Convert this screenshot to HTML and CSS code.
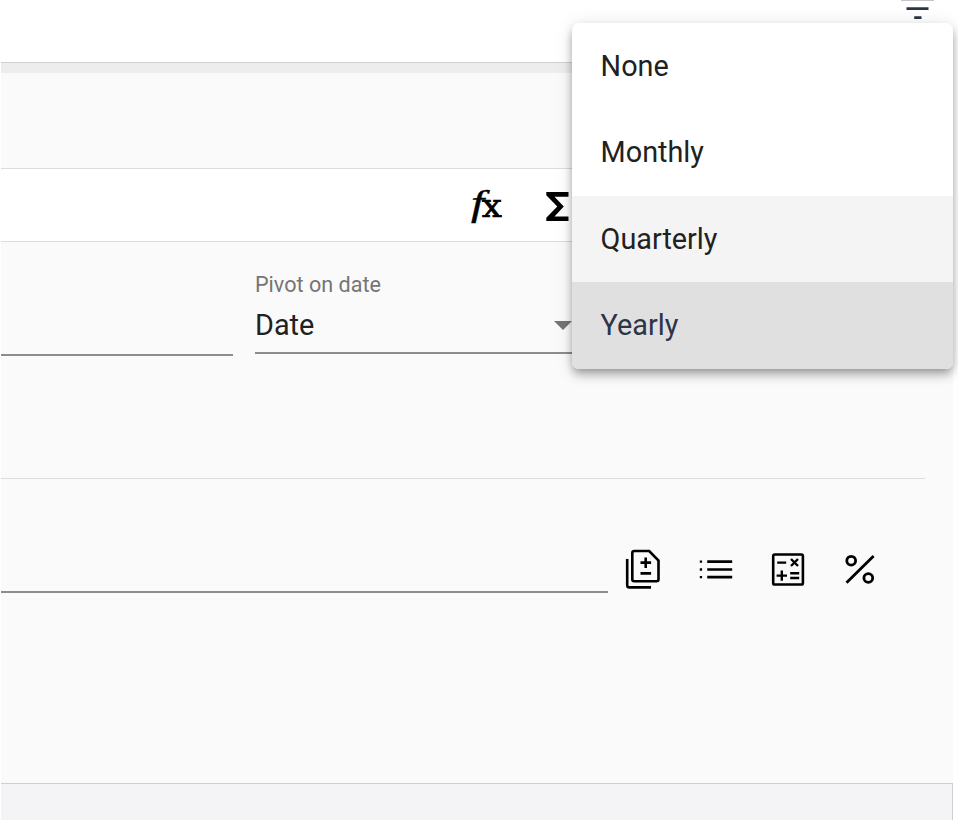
FILE: index.html
```html
<!DOCTYPE html>
<html lang="en">
<head>
<meta charset="utf-8">
<title>Pivot settings</title>
<link rel="stylesheet" href="styles.css">
</head>
<body>
<main class="panel">
  <header class="topbar">
    <svg class="filter" width="34" height="20" viewBox="0 0 34 20"><path fill="#c4c4ca" d="M0 0h33v1H0z"/><path fill="#2d3446" d="M5.5 7.2h22v2.7h-22zM13.2 16.2h7.3V19h-7.3z"/></svg>
  </header>
  <div class="band"></div>
  <div class="spacer"></div>
  <div class="formula">
    <svg class="fx" width="40" height="40" viewBox="0 0 40 40"><text class="fx-f" transform="translate(6 28.8) scale(1.36 1)">f</text><text class="fx-x" transform="translate(16.8 30.6) scale(1.15 1)">x</text></svg>
    <svg class="sigma" width="24" height="30" viewBox="0 0 24 30"><path d="M.3 0h22.2v4.7H8.5l9.3 9.8-9.3 9.9h14V29H.3v-3.2l11-11.3-11-11.3z"/></svg>
  </div>
  <section class="fields">
    <div class="blank"></div>
    <div class="select">
      <label>Pivot on date</label>
      <div class="value"><span>Date</span><i class="arrow"></i></div>
    </div>
  </section>
  <section class="entry">
    <div class="input"></div>
    <div class="tools">
      <svg width="36" height="42" viewBox="0 0 36 42" fill="none" stroke="#000" stroke-width="2.6"><path d="M9.3 3h14.9l9.3 9.5v18.8q0 2-2 2H9.3q-2 0-2-2V5q0-2 2-2zM2.2 11v26.2q0 2.2 2.2 2.2H26M20.7 9.5v10.4M15.5 14.6h10.6M15.5 25.4h10.6"/></svg>
      <svg width="36" height="42" viewBox="0 0 36 42"><path d="M9.2 12.3h25v2.6h-25zM9.2 20.2h25v2.6h-25zM9.2 27.8h25v2.6h-25z"/><path d="M1.8 12.4h2.3v2.4H1.8zM1.8 20.3h2.3v2.4H1.8zM1.8 27.9h2.3v2.4H1.8z"/></svg>
      <svg width="36" height="42" viewBox="0 0 36 42" fill="none" stroke="#000" stroke-width="2.6"><rect x="2.2" y="6.5" width="29.7" height="30" rx="1.6"/><path d="M6.2 14.6h9M20 11l7 7M27 11l-7 7M10.8 22.4v10.4M5.6 27.6H16M19.2 25.2h9M19.2 30h9" stroke-width="2.4"/></svg>
      <svg width="36" height="42" viewBox="0 0 36 42" fill="none" stroke="#000" stroke-width="2.8"><circle cx="7.2" cy="12.7" r="4.4"/><circle cx="24.3" cy="30" r="4.4"/><path d="M2.5 34.8 29.6 8"/></svg>
    </div>
  </section>
  <footer class="foot"></footer>
</main>
<ul class="menu">
  <li>None</li>
  <li>Monthly</li>
  <li class="hover">Quarterly</li>
  <li class="selected">Yearly</li>
</ul>
</body>
</html>
```
FILE: styles.css
```css
* { box-sizing: border-box; }
body {
  margin: 0;
  height: 820px;
  overflow: hidden;
  background: #fff;
  color: #212121;
  font-family: Roboto, sans-serif;
  font-size: 28.8px;
}
svg { display: block; flex: none; overflow: visible; }
.panel {
  display: flex;
  flex-direction: column;
  width: 952px;
  height: 820px;
  margin-left: 1px;
  background: #fafafa;
}
.topbar {
  display: flex;
  justify-content: flex-end;
  height: 63px;
  padding-right: 18px;
  background: #fff;
  border-bottom: 1px solid #cfcfcf;
}
.band { height: 10px; background: #ededed; }
.spacer { height: 96px; border-bottom: 1px solid #dcdcdc; }
.formula {
  display: flex;
  align-items: flex-start;
  gap: 41px;
  height: 73px;
  padding: 17px 0 0 464px;
  background: #fff;
  border-bottom: 1px solid #dcdcdc;
}
.sigma { margin-top: 6px; }
.fx-f { font: italic 35px "Liberation Serif", serif; stroke: #000; stroke-width: .4px; }
.fx-x { font: 31px "DejaVu Serif", serif; stroke: #000; stroke-width: .7px; }
.fields {
  display: flex;
  align-items: flex-start;
  gap: 22px;
  width: 924px;
  height: 237px;
  padding-top: 30px;
  border-bottom: 1px solid #dcdcdc;
}
.blank { width: 232px; height: 84px; border-bottom: 2px solid #8c8c8c; }
.select { width: 322px; height: 82px; border-bottom: 2px solid #8c8c8c; }
.select label { display: block; font-size: 21.6px; line-height: 26px; color: #757575; }
.value { display: flex; align-items: center; justify-content: space-between; height: 34px; margin-top: 10px; padding-right: 5px; }
.arrow { border: 9px solid transparent; border-top-color: #757575; border-bottom: 0; }
.entry { display: flex; gap: 17px; height: 304px; padding-top: 67px; }
.input { width: 607px; height: 47px; border-bottom: 2px solid #8c8c8c; }
.tools { display: flex; gap: 37px; padding-top: 2px; }
.foot { flex: 1; background: #f4f4f6; border: 1px solid #cfcfd1; border-width: 1px 1px 0 0; }
.menu {
  position: absolute;
  top: 23px;
  left: 572px;
  width: 381px;
  height: 346px;
  margin: 0;
  padding: 0;
  list-style: none;
  display: grid;
  grid-template-rows: 86px 87px 86px 87px;
  overflow: hidden;
  background: #fff;
  border-radius: 7px;
  box-shadow: 0 4px 8px -2px rgba(0,0,0,.3), 0 8px 10px rgba(0,0,0,.12), 0 2px 18px rgba(0,0,0,.12);
}
.menu li { padding-left: 28.6px; line-height: 86px; }
.menu .hover { background: #f4f4f4; }
.menu .selected { background: #e0e0e0; color: #2d3446; }
```
